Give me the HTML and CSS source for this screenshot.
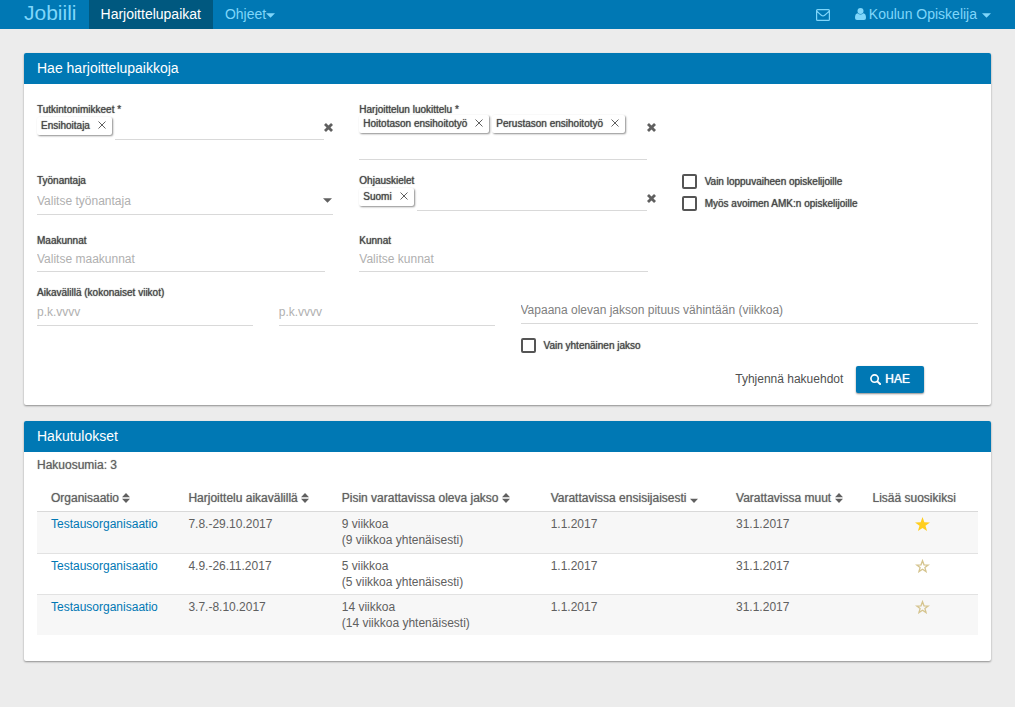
FILE: index.html
```html
<!DOCTYPE html>
<html lang="fi">
<head>
<meta charset="utf-8">
<title>Jobiili – Harjoittelupaikat</title>
<link rel="stylesheet" href="styles.css">
</head>
<body>
<svg class="sprite" aria-hidden="true">
  <symbol id="i-caret" viewBox="0 0 10 5"><path d="M0 0h10L5 5z"/></symbol>
  <symbol id="i-x" viewBox="0 0 8 8"><path d="M.5.5l7 7M7.5.5l-7 7" fill="none" stroke="currentColor"/></symbol>
  <symbol id="i-clear" viewBox="0 0 10 10"><path d="M2.2 0 5 2.8 7.8 0 10 2.2 7.2 5 10 7.8 7.8 10 5 7.2 2.2 10 0 7.8 2.8 5 0 2.2z"/></symbol>
  <symbol id="i-sort" viewBox="0 0 8 10"><path d="M0 4.2 4 0l4 4.2zM0 5.8h8L4 10z"/></symbol>
  <symbol id="i-sort-down" viewBox="0 0 8 10"><path d="M0 5.8h8L4 10z"/></symbol>
  <symbol id="i-star" viewBox="0 0 16 15"><path d="M8 0l2 5.6 6 .2-4.800 3.600L12.900 15 8 11.700 3.100 15l1.700-5.600L0 5.800l6-.2z"/></symbol>
  <symbol id="i-star-o" viewBox="0 0 16 15"><path d="M8 1.800l1.600 4.400 4.600.2-3.600 2.800 1.200 4.300L8 11l-3.800 2.500 1.200-4.300-3.600-2.800 4.600-.2z" fill="none" stroke="currentColor" stroke-width="1.400"/></symbol>
</svg>

<nav class="navbar">
  <a class="brand" href="#">Jobiili</a>
  <a class="nav-link nav-link--active" href="#">Harjoittelupaikat</a>
  <a class="nav-link" href="#">Ohjeet<svg class="caret"><use href="#i-caret"/></svg></a>
  <div class="nav-right">
    <a class="nav-mail" href="#" aria-label="Viestit"><svg class="mail" viewBox="0 0 14 12"><path d="M1.500.6h11q.9 0 .9.900v9q0 .9-.9.900h-11q-.9 0-.9-.9v-9q0-.9.9-.9zM.8 2.200c2 2 3 2.800 4.500 4q1.700 1.300 3.400 0c1.500-1.200 2.500-2 4.500-4" fill="none" stroke="currentColor" stroke-width="1.200"/></svg></a>
    <a class="nav-user" href="#"><svg class="user" viewBox="0 0 11 12"><circle cx="5.500" cy="3" r="3"/><path d="M2.600 5.300q2.900 2.500 5.800 0Q11 5.600 11 10q0 2-2 2H2q-2 0-2-2 0-4.400 2.600-4.700z"/></svg>Koulun Opiskelija<svg class="caret caret--user"><use href="#i-caret"/></svg></a>
  </div>
</nav>

<main class="page">
  <section class="panel">
    <h2 class="panel-title">Hae harjoittelupaikkoja</h2>
    <form class="search">
      <div class="row row--first">
        <div class="field">
          <label class="label" for="degree">Tutkintonimikkeet *</label>
          <div class="picker">
            <div class="multi multi--single">
              <span class="chip">Ensihoitaja<button class="chip-x" type="button" aria-label="Poista"><svg><use href="#i-x"/></svg></button></span>
              <input class="multi-input" id="degree" type="text">
            </div>
            <button class="clear" type="button" aria-label="Tyhjennä"><svg><use href="#i-clear"/></svg></button>
          </div>
        </div>
        <div class="field">
          <label class="label" for="category">Harjoittelun luokittelu *</label>
          <div class="picker">
            <div class="multi">
              <span class="chip">Hoitotason ensihoitotyö<button class="chip-x" type="button" aria-label="Poista"><svg><use href="#i-x"/></svg></button></span>
              <span class="chip">Perustason ensihoitotyö<button class="chip-x" type="button" aria-label="Poista"><svg><use href="#i-x"/></svg></button></span>
              <input class="multi-input" id="category" type="text">
            </div>
            <button class="clear" type="button" aria-label="Tyhjennä"><svg><use href="#i-clear"/></svg></button>
          </div>
        </div>
      </div>

      <div class="row row--second">
        <div class="field">
          <label class="label" for="employer">Työnantaja</label>
          <div class="select-wrap">
            <select class="select" id="employer"><option>Valitse työnantaja</option></select>
            <svg class="select-caret"><use href="#i-caret"/></svg>
          </div>
        </div>
        <div class="field">
          <label class="label" for="language">Ohjauskielet</label>
          <div class="picker">
            <div class="multi multi--single">
              <span class="chip">Suomi<button class="chip-x" type="button" aria-label="Poista"><svg><use href="#i-x"/></svg></button></span>
              <input class="multi-input" id="language" type="text">
            </div>
            <button class="clear" type="button" aria-label="Tyhjennä"><svg><use href="#i-clear"/></svg></button>
          </div>
        </div>
        <div class="field checks">
          <label class="check"><input type="checkbox">Vain loppuvaiheen opiskelijoille</label>
          <label class="check"><input type="checkbox">Myös avoimen AMK:n opiskelijoille</label>
        </div>
      </div>

      <div class="row row--third">
        <div class="field field--inset">
          <label class="label" for="region">Maakunnat</label>
          <input class="input" id="region" type="text" placeholder="Valitse maakunnat">
        </div>
        <div class="field field--inset">
          <label class="label" for="town">Kunnat</label>
          <input class="input" id="town" type="text" placeholder="Valitse kunnat">
        </div>
      </div>

      <div class="row row--dates">
        <div class="field">
          <label class="label" for="from">Aikavälillä (kokonaiset viikot)</label>
          <input class="input input--date" id="from" type="text" placeholder="p.k.vvvv">
        </div>
        <div class="field field--unlabelled">
          <input class="input input--date" type="text" placeholder="p.k.vvvv" aria-label="Loppupäivä">
        </div>
        <div class="field field--length">
          <input class="input input--dark" type="text" placeholder="Vapaana olevan jakson pituus vähintään (viikkoa)" aria-label="Jakson pituus">
          <label class="check"><input type="checkbox">Vain yhtenäinen jakso</label>
        </div>
      </div>

      <div class="actions">
        <button class="btn-plain" type="reset">Tyhjennä hakuehdot</button>
        <button class="btn-search" type="button"><svg viewBox="0 0 12 12"><path d="M8.300 8.300l2.700 2.700" stroke="currentColor" stroke-width="2.200" stroke-linecap="round"/><circle cx="5" cy="5" r="4" fill="none" stroke="currentColor" stroke-width="1.800"/></svg>HAE</button>
      </div>
    </form>
  </section>

  <section class="panel">
    <h2 class="panel-title">Hakutulokset</h2>
    <div class="results">
      <p class="count">Hakuosumia: 3</p>
      <table class="table">
        <colgroup><col class="c-org"><col class="c-range"><col class="c-long"><col class="c-first"><col class="c-other"><col class="c-fav"></colgroup>
        <thead>
          <tr>
            <th>Organisaatio <svg class="sort"><use href="#i-sort"/></svg></th>
            <th>Harjoittelu aikavälillä <svg class="sort"><use href="#i-sort"/></svg></th>
            <th>Pisin varattavissa oleva jakso <svg class="sort"><use href="#i-sort"/></svg></th>
            <th>Varattavissa ensisijaisesti <svg class="sort"><use href="#i-sort-down"/></svg></th>
            <th>Varattavissa muut <svg class="sort"><use href="#i-sort"/></svg></th>
            <th>Lisää suosikiksi</th>
          </tr>
        </thead>
        <tbody>
          <tr>
            <td><a href="#">Testausorganisaatio</a></td><td>7.8.-29.10.2017</td><td>9 viikkoa<br>(9 viikkoa yhtenäisesti)</td><td>1.1.2017</td><td>31.1.2017</td>
            <td class="fav"><button class="star star--on" type="button" aria-label="Suosikki"><svg><use href="#i-star"/></svg></button></td>
          </tr>
          <tr>
            <td><a href="#">Testausorganisaatio</a></td><td>4.9.-26.11.2017</td><td>5 viikkoa<br>(5 viikkoa yhtenäisesti)</td><td>1.1.2017</td><td>31.1.2017</td>
            <td class="fav"><button class="star" type="button" aria-label="Lisää suosikiksi"><svg><use href="#i-star-o"/></svg></button></td>
          </tr>
          <tr>
            <td><a href="#">Testausorganisaatio</a></td><td>3.7.-8.10.2017</td><td>14 viikkoa<br>(14 viikkoa yhtenäisesti)</td><td>1.1.2017</td><td>31.1.2017</td>
            <td class="fav"><button class="star" type="button" aria-label="Lisää suosikiksi"><svg><use href="#i-star-o"/></svg></button></td>
          </tr>
        </tbody>
      </table>
    </div>
  </section>
</main>
</body>
</html>
```
FILE: styles.css
```css
* { box-sizing: border-box; }
body {
  margin: 0;
  background: #ececec;
  color: #606060;
  font: 12px/16px "Liberation Sans", Arial, sans-serif;
}
svg { fill: currentColor; display: block; }
.sprite { position: absolute; width: 0; height: 0; }
button, input, select { font: inherit; color: inherit; margin: 0; padding: 0; border: 0; border-radius: 0; background: none; }
a { color: #0078b4; text-decoration: none; }

/* Navigation */
.navbar { display: flex; height: 29px; padding: 0 24px; background: #0078b4; font-size: 14px; line-height: 20px; }
.navbar a { color: #7fd6fa; }
.brand { font-size: 21px; line-height: 26px; padding-right: 12px; }
.nav-link { display: flex; align-items: center; padding: 0 12px 2px; }
.navbar .nav-link--active { background: #00587f; color: #fff; }
.nav-right { display: flex; margin-left: auto; gap: 25px; }
.nav-mail, .nav-user { display: flex; align-items: center; padding-bottom: 2px; }
.caret { width: 9px; height: 5px; margin-top: 3px; }
.caret--user { margin-left: 5px; }
.mail { width: 14px; height: 12px; margin-top: 2px; }
.user { width: 11px; height: 12px; margin-right: 3px; }

/* Panels */
.page { display: flex; flex-direction: column; gap: 16px; padding: 24px; }
.panel { background: #fff; border-radius: 2px; box-shadow: 0 1px 2px rgba(0, 0, 0, .4); }
.panel-title { margin: 0; padding: 0 13px; background: #0078b4; color: #fff; font-size: 14px; font-weight: 400; line-height: 31px; border-radius: 2px 2px 0 0; }

/* Search form */
.row { display: grid; grid-template-columns: repeat(3, 1fr); }
.row--first { padding-top: 19px; }
.row--second { padding-top: 14px; }
.row--third { padding-top: 19px; }
.row--dates { padding-top: 14px; grid-template-columns: 1fr 1fr 2fr; }
.field { padding: 0 13px; min-width: 0; }
.field--inset { padding-right: 21px; }
.field--unlabelled { padding-top: 12px; }
.field--length { padding-top: 12px; }
.label { display: block; height: 12px; padding-top: 1px; font-size: 10px; line-height: 12px; color: #484848; text-shadow: 0 0 1px #484848; }
.picker { display: flex; align-items: flex-start; }
.multi { flex: 1; display: flex; flex-wrap: wrap; align-items: flex-start; gap: 2px 3px; }
.multi--single .chip { margin-top: 2px; }
.multi-input { flex: 1; min-width: 100px; height: 25px; border-bottom: 1px solid #d9d9d9; }
.chip { display: flex; align-items: center; gap: 8px; height: 18px; padding: 0 6px 0 4px; border-radius: 2px; background: #fff; box-shadow: 1px 1px 2px rgba(0, 0, 0, .45); font-size: 10px; color: #484848; text-shadow: 0 0 1px #484848; }
.chip-x, .chip-x svg { width: 8px; height: 8px; }
.chip-x { margin-bottom: 3px; color: #606060; }
.clear { margin-top: 8px; color: #606060; }
.clear svg { width: 9px; height: 9px; }
.select-wrap { display: grid; align-items: center; margin-top: 1px; border-bottom: 1px solid #d9d9d9; }
.select { grid-area: 1 / 1; height: 27px; appearance: none; color: #b0b0b0; }
.select-caret { grid-area: 1 / 1; justify-self: end; width: 9px; height: 5px; margin-right: 1px; pointer-events: none; }
.input { display: block; width: 100%; height: 26px; border-bottom: 1px solid #d9d9d9; }
.input::placeholder { color: #b0b0b0; opacity: 1; }
.input--dark::placeholder { color: #808080; }
.input--date, .input--dark { padding-bottom: 2px; }
.input--date { margin-top: 2px; }
.check { display: flex; align-items: center; gap: 8px; font-size: 10px; line-height: 15px; color: #484848; text-shadow: 0 0 1px #484848; }
.check input { appearance: none; width: 15px; height: 15px; border: 2px solid #555; border-radius: 2px; }
.checks { display: flex; flex-direction: column; gap: 7px; }
.field--length .check { margin-top: 14px; }
.actions { display: flex; justify-content: flex-end; align-items: center; gap: 13px; padding: 13px 67px 12px 13px; }
.btn-plain { padding-bottom: 2px; color: #505050; }
.btn-search { display: flex; align-items: center; gap: 4px; height: 27px; padding: 0 14px 2px; border-radius: 2px; background: #0078b4; color: #fff; text-shadow: 0 0 1px #fff; box-shadow: 0 1px 2px rgba(0, 0, 0, .45); }
.btn-search svg { width: 11px; height: 11px; margin-top: 1px; }

/* Results */
.results { padding: 5px 13px 26px; }
.count { margin: 0 0 15px; text-shadow: 0 0 1px #909090; }
.table { width: 100%; table-layout: fixed; border-collapse: separate; border-spacing: 0; }
.c-org { width: 14.6%; }
.c-range { width: 16.3%; }
.c-long { width: 22.2%; }
.c-first { width: 19.7%; }
.c-other { width: 14.5%; }
.c-fav { width: 12.7%; }
.table th { padding: 2px 0 5px 14px; border-bottom: 1px solid #d9d9d9; font-weight: 400; text-align: left; white-space: nowrap; text-shadow: 0 0 1px #909090; }
.table td { padding: 4px 0 5px 14px; vertical-align: top; }
.table tbody tr:nth-child(odd) { background: #f7f7f7; }
.table tbody tr + tr td { border-top: 1px solid #e2e2e2; padding-bottom: 4px; }
.sort { display: inline-block; width: 8px; height: 10px; vertical-align: -1px; }
.table .fav { padding-top: 5px; padding-left: 21px; padding-right: 12px; }
.star { display: block; margin: 0 auto; color: #d5c48e; }
.star svg { width: 15px; height: 14px; }
.star--on { color: #ffce1f; }
```
